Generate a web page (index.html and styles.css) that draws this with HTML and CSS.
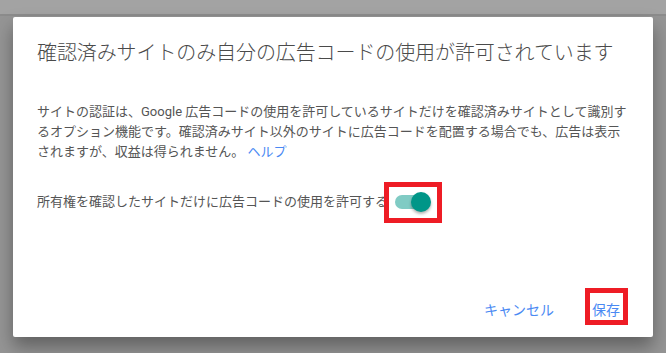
FILE: index.html
```html
<!DOCTYPE html>
<html lang="ja">
<head>
    <meta charset="UTF-8">
    <meta name="viewport" content="width=device-width, initial-scale=1.0">
    <title>確認済みサイト</title>
    <link rel="stylesheet" href="styles.css">
</head>
<body>

    <div class="topbar"></div>

    <div class="dialog">
        <h1 class="title">確認済みサイトのみ自分の広告コードの使用が許可されています</h1>

        <p class="desc">サイトの認証は、Google 広告コードの使用を許可しているサイトだけを確認済みサイトとして識別するオプション機能です。確認済みサイト以外のサイトに広告コードを配置する場合でも、広告は表示されますが、収益は得られません。 <a class="help" href="#">ヘルプ</a></p>

        <div class="setting">
            <span>所有権を確認したサイトだけに広告コードの使用を許可する</span>
            <div class="switch">
                <div class="track"></div>
                <div class="thumb"></div>
                <div class="mark mark-switch"></div>
            </div>
        </div>

        <div class="actions">
            <button class="button">キャンセル</button>
            <button class="button save">保存<span class="mark mark-save"></span></button>
        </div>
    </div>

</body>
</html>
```

FILE: styles.css
```css
body {
    margin: 0;
    background-color: #959595;
    font-family: Roboto, "Noto Sans CJK JP", sans-serif;
    height: 353px;
    overflow: hidden;
}
.topbar {
    height: 14px;
    background-color: #a3a3a3;
    border-bottom: 2px solid #8c8c8c;
}
.dialog {
    width: 592px;
    height: 298px;
    margin: 1px 0 0 13px;
    padding: 22px 24px 0 24px;
    background-color: #fff;
    border-radius: 2px;
    box-shadow: 0 10px 18px rgba(0, 0, 0, 0.35);
    display: flex;
    flex-direction: column;
}
.title {
    margin: 0;
    font-size: 20px;
    font-weight: 300;
    line-height: 28px;
    color: #4a4a4a;
    letter-spacing: -0.1px;
}
.desc {
    margin: 35px 0 0 0;
    font-size: 13px;
    line-height: 20px;
    color: #555;
}
.help {
    color: #4a89f3;
    text-decoration: none;
}
.setting {
    margin-top: 30px;
    display: flex;
    align-items: center;
    font-size: 13px;
    line-height: 20px;
    color: #555;
}
.switch {
    position: relative;
    width: 36px;
    height: 20px;
    margin-left: 7px;
}
.track {
    position: absolute;
    left: 0;
    top: 3px;
    width: 34px;
    height: 14px;
    border-radius: 7px;
    background-color: #80cbc4;
}
.thumb {
    position: absolute;
    left: 16px;
    top: 0;
    width: 20px;
    height: 20px;
    border-radius: 50%;
    background-color: #009688;
    box-shadow: 0 2px 3px rgba(0, 0, 0, 0.3);
}
.mark {
    position: absolute;
    border: 5px solid #ee1c25;
    box-sizing: border-box;
}
.mark-switch {
    left: -11px;
    top: -10px;
    width: 58px;
    height: 41px;
}
.actions {
    margin-top: auto;
    margin-bottom: 10px;
    display: flex;
    justify-content: flex-end;
    gap: 22px;
}
.button {
    position: relative;
    height: 36px;
    padding: 0 8px;
    border: none;
    background: none;
    font-family: Roboto, "Noto Sans CJK JP", sans-serif;
    font-size: 14px;
    color: #4a89f3;
    cursor: pointer;
}
.save {
    margin-right: 1px;
}
.mark-save {
    left: 1px;
    top: -3px;
    width: 43px;
    height: 37px;
}
```
